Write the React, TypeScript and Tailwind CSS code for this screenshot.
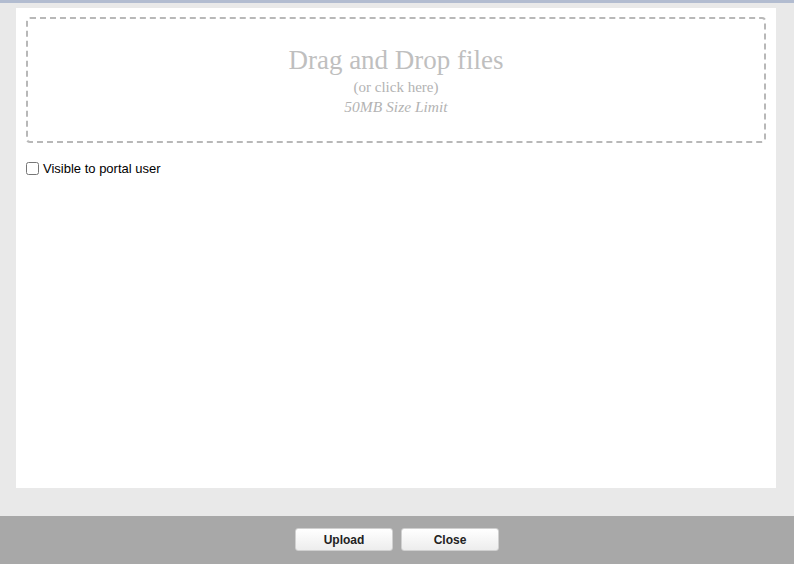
import React from "react";

export default function App() {
  return (
    <div className="w-[794px] h-[564px] flex flex-col bg-[#e9e9e9] border-t-[3px] border-[#b2bcd0] overflow-hidden" style={{ fontFamily: '"Liberation Sans", Arial, sans-serif' }}>
      <div className="pl-[16px] pr-[18px] pt-[5px]">
        <div className="bg-white h-[480px] pt-[9px] px-[10px]">
          <div className="h-[126px] border-2 border-dashed border-[#b8b8b8] rounded-[4px] flex flex-col items-center pt-[25px] cursor-pointer" style={{ fontFamily: '"Liberation Serif", "Times New Roman", serif' }}>
            <div className="text-[27px] leading-[32px] text-[#bfbfbf]">Drag and Drop files</div>
            <div className="text-[15px] leading-[19px] mt-[2px] text-[#b3b3b3]">(or click here)</div>
            <div className="text-[15.5px] leading-[19px] italic text-[#b3b3b3]">50MB Size Limit</div>
          </div>
          <label className="flex items-center mt-[16px] text-[13px] text-[#000]">
            <input type="checkbox" className="w-[13px] h-[13px] m-0 mr-[4px] accent-[#888]" />
            <span>Visible to portal user</span>
          </label>
        </div>
      </div>
      <div className="flex-1" />
      <div className="h-[48px] bg-[#a8a8a8] flex justify-center items-start pt-[12px] gap-[8px]">
        <button className="w-[98px] h-[23px] rounded-[3px] border border-[#d0d0d0] bg-gradient-to-b from-white to-[#ededed] text-[12px] font-bold text-[#222]">Upload</button>
        <button className="w-[98px] h-[23px] rounded-[3px] border border-[#d0d0d0] bg-gradient-to-b from-white to-[#ededed] text-[12px] font-bold text-[#222]">Close</button>
      </div>
    </div>
  );
}
